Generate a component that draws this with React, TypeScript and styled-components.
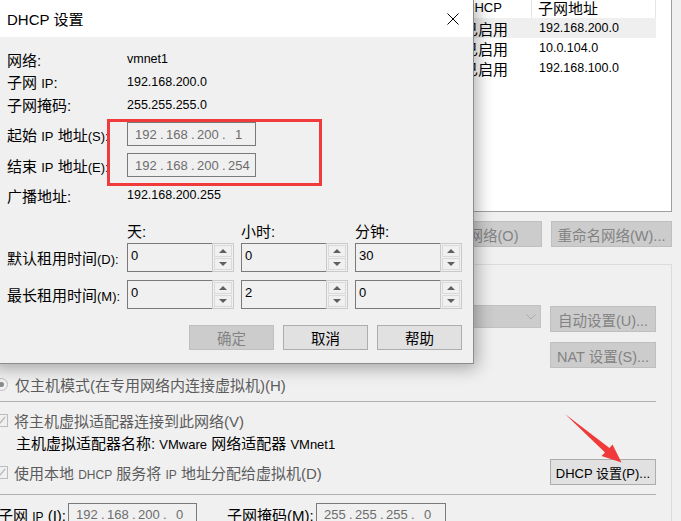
import React from "react";
import styled, { createGlobalStyle } from "styled-components";

const Global = createGlobalStyle`
  *, *::before, *::after { box-sizing: border-box; }
  html, body { margin: 0; padding: 0; background: #f0f0f0; }
  body {
    font-family: "Liberation Sans", "Noto Sans CJK SC", sans-serif;
    font-size: 15px;
    color: #000;
  }
`;

const Screen = styled.div`
  position: relative;
  width: 681px;
  height: 521px;
  overflow: hidden;
  background: #f0f0f0;
`;

const Latin = styled.span<{ $fs?: number }>`
  font-size: ${(p) => p.$fs ?? 13}px;
`;

const Text = styled.span<{ $dim?: boolean }>`
  white-space: pre;
  color: ${(p) => (p.$dim ? "#5c5c5c" : "#000")};
`;

/* ---------- background window ---------- */

const Window = styled.div`
  display: flex;
  flex-direction: column;
  margin: -4px 9px 0 -30px;
`;

const COLS = "90px 110px 160px 130px 71px 124px";

const List = styled.div`
  height: 216px;
  border: 1px solid #a0a0a0;
  background: #fff;
  overflow: hidden;
`;

const ListHead = styled.div`
  display: grid;
  grid-template-columns: ${COLS};
  width: 685px;
  height: 21px;
`;

const HeadCell = styled.div<{ $pl?: number; $fs?: number }>`
  border-right: 1px solid #e5e5e5;
  padding-left: ${(p) => p.$pl ?? 6}px;
  display: flex;
  align-items: center;
  font-size: ${(p) => p.$fs ?? 15}px;
  white-space: nowrap;
  overflow: hidden;
`;

const ListRow = styled.div<{ $sel?: boolean }>`
  display: grid;
  grid-template-columns: ${COLS};
  width: 685px;
  height: 20px;
  background: ${(p) => (p.$sel ? "#efefef" : "transparent")};
`;

const Cell = styled.div<{ $pl?: number; $fs?: number }>`
  padding-left: ${(p) => p.$pl ?? 6}px;
  display: flex;
  align-items: center;
  font-size: ${(p) => p.$fs ?? 15}px;
  white-space: nowrap;
  overflow: hidden;
`;

const ButtonRow = styled.div`
  display: flex;
  justify-content: flex-end;
  gap: 9px;
  margin-top: 9px;
`;

const Btn = styled.div<{ $w: number; $h?: number; $off?: boolean; $fs?: number }>`
  width: ${(p) => p.$w}px;
  height: ${(p) => p.$h ?? 26}px;
  flex-shrink: 0;
  display: flex;
  align-items: center;
  justify-content: center;
  white-space: pre;
  font-size: ${(p) => p.$fs ?? 14.5}px;
  background: ${(p) => (p.$off ? "#cccccc" : "#e1e1e1")};
  border: 1px solid ${(p) => (p.$off ? "#bfbfbf" : "#adadad")};
  color: ${(p) => (p.$off ? "#838383" : "#000")};
`;

const Group = styled.div`
  margin-top: 17px;
  border: 1px solid #dcdcdc;
  padding: 0 15px 40px 24px;
  display: flex;
  flex-direction: column;
`;

const GRow = styled.div<{ $h: number; $mt: number; $pl?: number; $between?: boolean; $top?: boolean }>`
  display: flex;
  align-items: ${(p) => (p.$top ? "flex-start" : "center")};
  justify-content: ${(p) => (p.$between ? "space-between" : "flex-start")};
  height: ${(p) => p.$h}px;
  margin-top: ${(p) => p.$mt}px;
  padding-left: ${(p) => p.$pl ?? 0}px;
  white-space: nowrap;
  font-size: 15px;
`;

const Choice = styled.div`
  display: flex;
  align-items: center;
  height: 20px;
  font-size: 15px;
`;

const Radio = styled.span<{ $on?: boolean }>`
  width: 13px;
  height: 13px;
  flex-shrink: 0;
  border-radius: 50%;
  border: 1px solid #bcbcbc;
  background: #f0f0f0;
  margin-right: 7px;
  display: flex;
  align-items: center;
  justify-content: center;
  &::after {
    content: "";
    width: 5px;
    height: 5px;
    border-radius: 50%;
    background: ${(p) => (p.$on ? "#8a8a8a" : "transparent")};
  }
`;

const CheckBox = styled.span`
  width: 13px;
  height: 13px;
  flex-shrink: 0;
  border: 1px solid #bcbcbc;
  background: #f0f0f0;
  margin-right: 6px;
  display: flex;
  align-items: center;
  justify-content: center;
`;

const Sep = styled.div<{ $mt: number }>`
  height: 1px;
  background: #b0b0b0;
  margin-top: ${(p) => p.$mt}px;
`;

const Select = styled.div`
  flex: 1;
  align-self: flex-start;
  height: 23px;
  background: #cccccc;
  border: 1px solid #c2c2c2;
  margin-right: 9px;
  display: flex;
  align-items: center;
  justify-content: flex-end;
  padding-right: 4px;
`;

const GLabel = styled.span<{ $w: number; $pl?: number }>`
  width: ${(p) => p.$w}px;
  padding-left: ${(p) => p.$pl ?? 0}px;
  flex-shrink: 0;
  font-size: 15px;
  white-space: pre;
`;

const IpBox = styled.div<{ $w: number; $h?: number }>`
  width: ${(p) => p.$w}px;
  height: ${(p) => p.$h ?? 24}px;
  flex-shrink: 0;
  border: 1px solid #7a7a7a;
  background: #f0f0f0;
  display: flex;
  align-items: center;
  padding-left: 7px;
  font-size: 13px;
  color: #6d6d6d;
`;

const Octet = styled.span`
  width: 21px;
  text-align: center;
`;

const Dot = styled.span`
  width: 10px;
  padding-left: 4px;
`;

/* ---------- dialog ---------- */

const Dialog = styled.div`
  position: absolute;
  left: -10px;
  top: -1px;
  width: 484px;
  height: 365px;
  background: #f0f0f0;
  border: 1px solid #8c8c8c;
  box-shadow: 3px 4px 16px rgba(0, 0, 0, 0.32);
  display: flex;
  flex-direction: column;
`;

const TitleBar = styled.div`
  height: 37px;
  flex-shrink: 0;
  background: #fff;
  display: flex;
  align-items: center;
  justify-content: space-between;
  padding: 0 14px 0 16px;
`;

const TitleText = styled.span`
  font-size: 15px;
`;

const Body = styled.div`
  position: relative;
  display: flex;
  flex-direction: column;
  padding: 11px 11px 0 16px;
`;

const InfoRow = styled.div<{ $h: number; $mt?: number }>`
  display: flex;
  align-items: center;
  height: ${(p) => p.$h}px;
  margin-top: ${(p) => p.$mt ?? 0}px;
`;

const Label = styled.span`
  width: 120px;
  flex-shrink: 0;
  font-size: 15px;
  white-space: pre;
`;

const Value = styled.span`
  font-size: 12.5px;
`;

const Highlight = styled.div`
  position: absolute;
  left: 116px;
  top: 82px;
  width: 215px;
  height: 67px;
  border: 3px solid #ef3b3b;
  pointer-events: none;
`;

const SpinRow = styled.div<{ $h: number; $mt: number }>`
  display: grid;
  grid-template-columns: 113px repeat(3, 107px);
  column-gap: 7px;
  align-items: center;
  height: ${(p) => p.$h}px;
  margin-top: ${(p) => p.$mt}px;
  font-size: 15px;
  white-space: pre;
`;

const Spinner = styled.div`
  display: flex;
  height: 29px;
`;

const SpinField = styled.div`
  flex: 1;
  border: 1px solid #7a7a7a;
  border-right: none;
  background: #f0f0f0;
  padding: 4px 0 0 3px;
  font-size: 13px;
  line-height: 15px;
`;

const SpinCol = styled.div`
  width: 22px;
  border: 1px solid #c9c9c9;
  background: #f0f0f0;
  display: flex;
  flex-direction: column;
  padding: 1px;
  gap: 1px;
`;

const SpinBtn = styled.div`
  flex: 1;
  border: 1px solid #dadada;
  display: flex;
  align-items: center;
  justify-content: center;
`;

const Tri = styled.span<{ $dir: "up" | "down" }>`
  width: 0;
  height: 0;
  border-left: 4px solid transparent;
  border-right: 4px solid transparent;
  ${(p) =>
    p.$dir === "up"
      ? "border-bottom: 4px solid #5f5f5f;"
      : "border-top: 4px solid #5f5f5f;"}
`;

const DialogButtons = styled.div`
  display: flex;
  justify-content: flex-end;
  gap: 9px;
  margin-top: 16px;
`;

const Arrow = styled.svg`
  position: absolute;
  left: 555px;
  top: 405px;
  pointer-events: none;
`;

/* ---------- pieces ---------- */

const Ip: React.FC<{ parts: string[] }> = ({ parts }) => (
  <>
    {parts.map((o, i) => (
      <React.Fragment key={i}>
        <Octet>{o}</Octet>
        {i < parts.length - 1 && <Dot>.</Dot>}
      </React.Fragment>
    ))}
  </>
);

const Spin: React.FC<{ value: string }> = ({ value }) => (
  <Spinner>
    <SpinField>{value}</SpinField>
    <SpinCol>
      <SpinBtn>
        <Tri $dir="up" />
      </SpinBtn>
      <SpinBtn>
        <Tri $dir="down" />
      </SpinBtn>
    </SpinCol>
  </Spinner>
);

const Check = () => (
  <CheckBox>
    <svg width="9" height="8" viewBox="0 0 9 8">
      <path d="M0.8 4.2 L3.3 6.7 L8.2 0.8" fill="none" stroke="#b8b8b8" strokeWidth="1.3" />
    </svg>
  </CheckBox>
);

const listRows = [
  { name: "VMnet1", type: "仅主机模式", ext: "-", host: "已连接", dhcp: "已启用", subnet: "192.168.200.0", sel: true },
  { name: "VMnet8", type: "NAT 模式", ext: "NAT 模式", host: "已连接", dhcp: "已启用", subnet: "10.0.104.0" },
  { name: "VMnet10", type: "仅主机模式", ext: "-", host: "已连接", dhcp: "已启用", subnet: "192.168.100.0" },
];

export default function App() {
  return (
    <Screen>
      <Global />
      <Window>
        <List>
          <ListHead>
            <HeadCell>名称</HeadCell>
            <HeadCell>类型</HeadCell>
            <HeadCell>外部连接</HeadCell>
            <HeadCell>主机连接</HeadCell>
            <HeadCell $pl={4} $fs={13}>DHCP</HeadCell>
            <HeadCell>子网地址</HeadCell>
          </ListHead>
          {listRows.map((r) => (
            <ListRow key={r.name} $sel={r.sel}>
              <Cell>{r.name}</Cell>
              <Cell>{r.type}</Cell>
              <Cell>{r.ext}</Cell>
              <Cell>{r.host}</Cell>
              <Cell $pl={2}>{r.dhcp}</Cell>
              <Cell $pl={7} $fs={12.5}>{r.subnet}</Cell>
            </ListRow>
          ))}
        </List>

        <ButtonRow>
          <Btn $w={110} $off>添加网络(E)...</Btn>
          <Btn $w={126} $off>移除网络(O)</Btn>
          <Btn $w={121} $off>重命名网络(W)...</Btn>
        </ButtonRow>

        <Group>
          <GRow $h={22} $mt={9}>
            <Choice>
              <Radio />
              <Text $dim>桥接模式(将虚拟机直接连接到外部网络)(B)</Text>
            </Choice>
          </GRow>
          <GRow $h={27} $mt={9}>
            <GLabel $w={110} $pl={20}>已桥接至(G):</GLabel>
            <Select>
              <svg width="10" height="6" viewBox="0 0 10 6">
                <path d="M0.5 0.5 L5 5 L9.5 0.5" fill="none" stroke="#a9a9a9" strokeWidth="1" />
              </svg>
            </Select>
            <Btn $w={106} $off style={{ alignSelf: "flex-end" }}>自动设置(U)...</Btn>
          </GRow>
          <GRow $h={26} $mt={10} $between $top>
            <Choice>
              <Radio />
              <Text $dim>NAT 模式(与虚拟机共享主机的 IP 地址)(N)</Text>
            </Choice>
            <Btn $w={106} $off>NAT 设置(S)...</Btn>
          </GRow>
          <GRow $h={22} $mt={5}>
            <Choice>
              <Radio $on />
              <Text $dim>仅主机模式(在专用网络内连接虚拟机)(H)</Text>
            </Choice>
          </GRow>
          <Sep $mt={6} />
          <GRow $h={22} $mt={7}>
            <Choice>
              <Check />
              <Text $dim>将主机虚拟适配器连接到此网络(V)</Text>
            </Choice>
          </GRow>
          <GRow $h={22} $mt={0} $pl={21}>
            <Text>
              主机虚拟适配器名称: <Latin>VMware</Latin> 网络适配器 <Latin>VMnet1</Latin>
            </Text>
          </GRow>
          <GRow $h={26} $mt={6} $between>
            <Choice>
              <Check />
              <Text $dim>
                使用本地 <Latin $fs={12}>DHCP</Latin> 服务将 <Latin $fs={12}>IP</Latin> 地址分配给虚拟机(D)
              </Text>
            </Choice>
            <Btn $w={106} $fs={13}>DHCP 设置(P)...</Btn>
          </GRow>
          <Sep $mt={9} />
          <GRow $h={23} $mt={8}>
            <GLabel $w={73} $pl={3}>
              子网 <Latin $fs={12}>IP</Latin> (I):
            </GLabel>
            <IpBox $w={129} $h={23}>
              <Ip parts={["192", "168", "200", "0"]} />
            </IpBox>
            <GLabel $w={119} $pl={30}>子网掩码(M):</GLabel>
            <IpBox $w={130} $h={23}>
              <Ip parts={["255", "255", "255", "0"]} />
            </IpBox>
          </GRow>
        </Group>
      </Window>

      <Dialog>
        <TitleBar>
          <TitleText>DHCP 设置</TitleText>
          <svg width="12" height="12" viewBox="0 0 12 12">
            <path d="M0.5 0.5 L11.5 11.5 M11.5 0.5 L0.5 11.5" stroke="#000" strokeWidth="1" />
          </svg>
        </TitleBar>
        <Body>
          <InfoRow $h={22}>
            <Label>网络:</Label>
            <Value>vmnet1</Value>
          </InfoRow>
          <InfoRow $h={23}>
            <Label>
              子网 <Latin>IP</Latin>:
            </Label>
            <Value>192.168.200.0</Value>
          </InfoRow>
          <InfoRow $h={23}>
            <Label>子网掩码:</Label>
            <Value>255.255.255.0</Value>
          </InfoRow>
          <InfoRow $h={24} $mt={6}>
            <Label>
              起始 <Latin>IP</Latin> 地址<Latin>(S):</Latin>
            </Label>
            <IpBox $w={129}>
              <Ip parts={["192", "168", "200", "1"]} />
            </IpBox>
          </InfoRow>
          <InfoRow $h={24} $mt={7}>
            <Label>
              结束 <Latin>IP</Latin> 地址<Latin>(E):</Latin>
            </Label>
            <IpBox $w={129}>
              <Ip parts={["192", "168", "200", "254"]} />
            </IpBox>
          </InfoRow>
          <InfoRow $h={22} $mt={7}>
            <Label>广播地址:</Label>
            <Value>192.168.200.255</Value>
          </InfoRow>

          <SpinRow $h={22} $mt={13}>
            <span />
            <span>天:</span>
            <span>小时:</span>
            <span>分钟:</span>
          </SpinRow>
          <SpinRow $h={29} $mt={2}>
            <span>
              默认租用时间<Latin>(D):</Latin>
            </span>
            <Spin value="0" />
            <Spin value="0" />
            <Spin value="30" />
          </SpinRow>
          <SpinRow $h={29} $mt={8}>
            <span>
              最长租用时间<Latin>(M):</Latin>
            </span>
            <Spin value="0" />
            <Spin value="2" />
            <Spin value="0" />
          </SpinRow>

          <DialogButtons>
            <Btn $w={85} $h={25} $off>确定</Btn>
            <Btn $w={85} $h={25}>取消</Btn>
            <Btn $w={85} $h={25}>帮助</Btn>
          </DialogButtons>

          <Highlight />
        </Body>
      </Dialog>

      <Arrow width="80" height="65" viewBox="0 0 80 65">
        <path
          d="M10 9 L54.5 43 L57.5 39.5 L66.5 57.5 L46.5 51 L50 47.5 Z"
          fill="#f03a3a"
        />
      </Arrow>
    </Screen>
  );
}
